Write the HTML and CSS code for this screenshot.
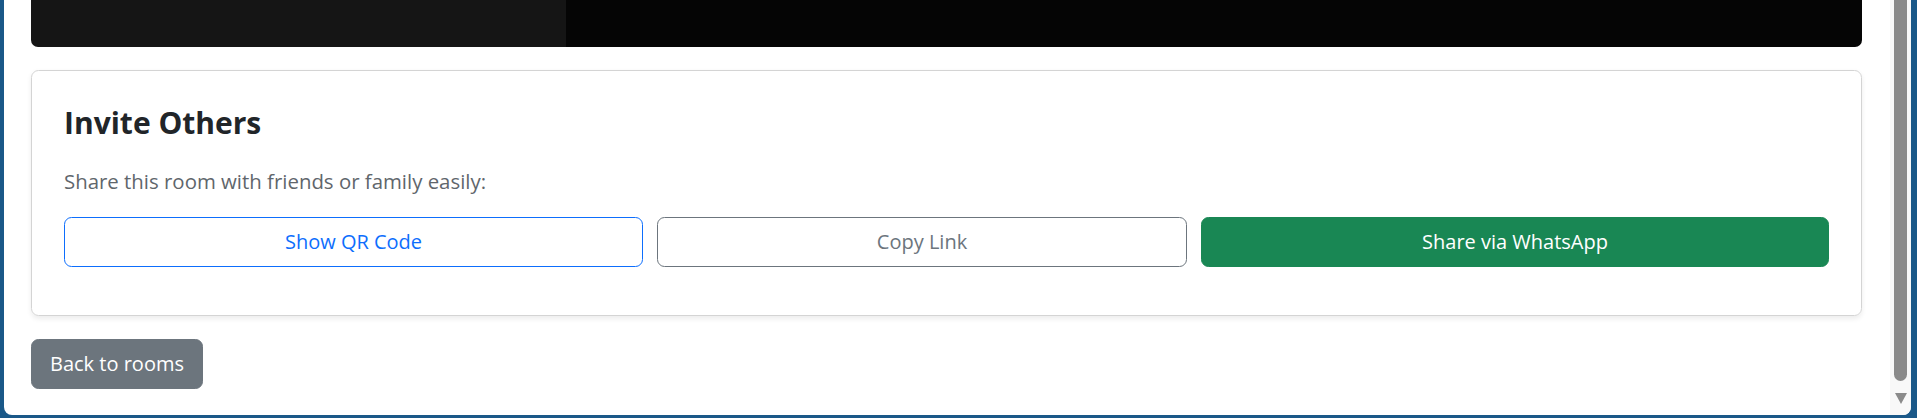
FILE: index.html
```html
<!DOCTYPE html>
<html lang="en">
<head>
<meta charset="utf-8">
<title>Room</title>
<link rel="stylesheet" href="styles.css">
</head>
<body>
<div class="window">
  <main class="page">
    <div class="video">
      <div class="video-tile video-tile--local"></div>
      <div class="video-tile video-tile--remote"></div>
    </div>
    <section class="card">
      <h3 class="card-title">Invite Others</h3>
      <p class="card-text">Share this room with friends or family easily:</p>
      <div class="actions">
        <button class="btn btn-outline-primary">Show QR Code</button>
        <button class="btn btn-outline-secondary">Copy Link</button>
        <button class="btn btn-success">Share via WhatsApp</button>
      </div>
    </section>
    <div class="footer">
      <button class="btn btn-secondary">Back to rooms</button>
    </div>
  </main>
  <div class="scrollbar">
    <div class="scrollbar-thumb"></div>
    <div class="scrollbar-arrow"></div>
  </div>
</div>
</body>
</html>
```
FILE: styles.css
```css
* { box-sizing: border-box; }

html, body {
  margin: 0;
  height: 418px;
  overflow: hidden;
}

body {
  background: #1a5888;
  font-family: "Segoe UI", "Open Sans", "Liberation Sans", sans-serif;
  color: #212529;
}

.window {
  margin-left: 4px;
  width: 1907px;
  height: 415px;
  background: #fff;
  border-radius: 0 0 8px 8px;
  display: flex;
  overflow: hidden;
}

.page {
  flex: 1;
  padding: 0 28px 0 27px;
  display: flex;
  flex-direction: column;
}

.video {
  height: 47px;
  display: grid;
  grid-template-columns: 535px 1fr;
  border-radius: 0 0 7px 7px;
  overflow: hidden;
}

.video-tile--local { background: #151515; }
.video-tile--remote { background: #050505; }

.card {
  margin-top: 23px;
  border: 1px solid #d4d4d4;
  border-radius: 7.5px;
  box-shadow: 0 2.5px 5px rgba(0, 0, 0, 0.075);
  padding: 34px 32px 48px 32px;
}

.card-title {
  margin: 0 0 25px 0;
  font-size: 30px;
  line-height: 36px;
  font-weight: 700;
  color: #212529;
}

.card-text {
  margin: 0 0 21px 0;
  font-size: 20.4px;
  line-height: 30px;
  color: #5f666c;
}

.actions {
  display: grid;
  grid-template-columns: 579fr 530fr 628fr;
  gap: 14px;
}

.btn {
  font-family: inherit;
  font-size: 20px;
  line-height: 30px;
  padding: 9px 15px;
  border: 1px solid transparent;
  border-radius: 7.5px;
  background: transparent;
  text-align: center;
}

.btn-outline-primary {
  color: #0d6efd;
  border-color: #0d6efd;
}

.btn-outline-secondary {
  color: #6c757d;
  border-color: #6c757d;
}

.btn-success {
  color: #fff;
  background: #198754;
  border-color: #198754;
}

.footer {
  margin-top: 23px;
  display: flex;
}

.btn-secondary {
  color: #fff;
  background: #6c757d;
  border-color: #6c757d;
  padding: 9px 18px;
}

.scrollbar {
  width: 21px;
  background: #f8f8f8;
  display: flex;
  flex-direction: column;
  align-items: center;
  padding: 0 4px;
}

.scrollbar-thumb {
  width: 13px;
  height: 381px;
  background: #8a8a8a;
  border-radius: 0 0 6.5px 6.5px;
}

.scrollbar-arrow {
  margin-top: 12px;
  width: 0;
  height: 0;
  border-left: 6.5px solid transparent;
  border-right: 6.5px solid transparent;
  border-top: 11px solid #8a8a8a;
}
```
